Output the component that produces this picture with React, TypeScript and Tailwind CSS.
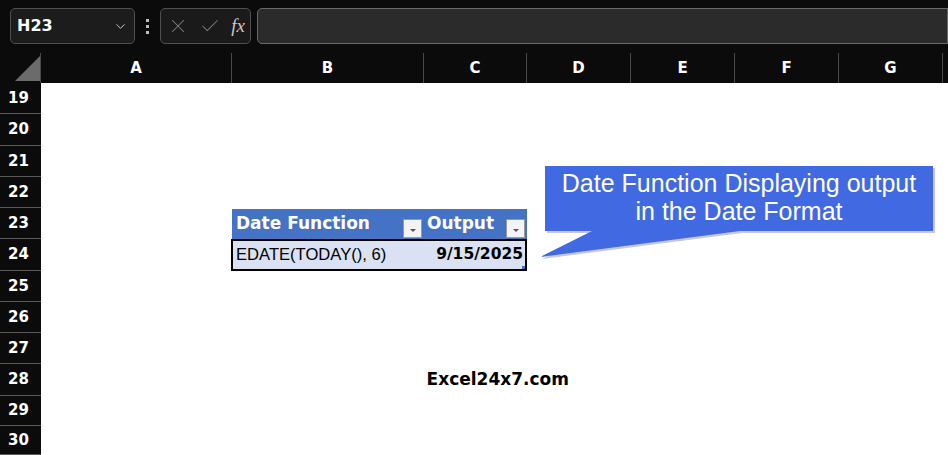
import { X, Check, ChevronDown } from "lucide-react";

const cols = ["A", "B", "C", "D", "E", "F", "G"];
const rows = [
  { n: 19, h: "h-[31px]" },
  { n: 20, h: "h-[32px]" },
  { n: 21, h: "h-[31px]" },
  { n: 22, h: "h-[31px]" },
  { n: 23, h: "h-[31px]" },
  { n: 24, h: "h-[32px]" },
  { n: 25, h: "h-[31px]" },
  { n: 26, h: "h-[31px]" },
  { n: 27, h: "h-[31px]" },
  { n: 28, h: "h-[32px]" },
  { n: 29, h: "h-[30px]" },
  { n: 30, h: "h-[29px]" },
];

const FilterBtn = () => (
  <div className="w-[19px] h-[19px] bg-[#f4f4f4] border border-[#9a9a9a] flex items-end justify-center pb-[5px]">
    <div className="w-0 h-0 border-l-[3px] border-r-[3px] border-t-[3px] border-l-transparent border-r-transparent border-t-[#555]" />
  </div>
);

const App = () => {
  return (
    <div className="relative w-[948px] h-[455px] overflow-hidden bg-[#0b0b0b] font-['DejaVu_Sans',sans-serif]">
      {/* formula bar */}
      <div className="flex items-center h-[53px] pl-[10px] pb-[1px] gap-[6px]">
        <div className="flex items-center justify-between w-[125px] h-[36px] rounded-[5px] border border-[#505050] bg-[#1c1c1c] pl-[6px] pr-[6px]">
          <span className="text-white font-bold text-[16px]">H23</span>
          <ChevronDown size={15} className="text-[#cfcfcf]" strokeWidth={1.5} />
        </div>
        <div className="flex flex-col gap-[3px] px-[5px]">
          <div className="w-[3px] h-[3px] bg-[#bdbdbd]" />
          <div className="w-[3px] h-[3px] bg-[#bdbdbd]" />
          <div className="w-[3px] h-[3px] bg-[#bdbdbd]" />
        </div>
        <div className="flex items-center justify-between w-[91px] h-[36px] rounded-[5px] border border-[#505050] bg-[#1a1a1a] pl-[6px] pr-[5px]">
          <X size={22} strokeWidth={1.1} className="text-[#7d7d7d]" />
          <Check size={22} strokeWidth={1.1} className="text-[#7d7d7d]" />
          <span className="text-[#c8c8c8] italic text-[19px] font-['Liberation_Serif',serif]">fx</span>
        </div>
        <div className="flex-1 h-[36px] rounded-l-[5px] border border-[#6a6a6a] bg-[#2b2b2b]" />
      </div>

      {/* column header */}
      <div className="flex h-[30px]">
        <div className="w-[41px] relative border-r border-[#4a4a4a]">
          <svg className="absolute left-[15px] top-[3px]" width="25" height="25">
            <polygon points="25,0 25,25 0,25" fill="#6b6b6b" />
          </svg>
        </div>
        {cols.map((c, i) => (
          <div
            key={c}
            className={`flex items-center justify-center text-white font-bold text-[15px] border-r border-[#4a4a4a] ${
              i === 0 ? "w-[191px]" : i === 1 ? "w-[192px]" : i === 2 ? "w-[103px]" : "w-[104px]"
            }`}
          >
            {c}
          </div>
        ))}
      </div>

      {/* sheet body */}
      <div className="flex">
        <div className="w-[41px] flex flex-col">
          {rows.map((r) => (
            <div
              key={r.n}
              className={`${r.h} flex items-center justify-center pr-[4px] text-white font-bold text-[15px] border-b border-[#5a5a5a] bg-[#0b0b0b]`}
            >
              {r.n}
            </div>
          ))}
        </div>
        <div className="flex-1 bg-white">
          <div className="grid grid-cols-[191px_192px_103px] grid-rows-[31px_32px_31px_31px_31px_32px_31px_31px_31px_32px_30px_29px]">
            {/* table header row 23 */}
            <div className="col-start-2 col-span-2 row-start-5 flex bg-[#4472c4] text-white font-bold text-[17px] mt-[1px]">
              <div className="w-[192px] flex items-center justify-between pl-[4px] pr-[2px]">
                <span>Date Function</span>
                <div className="mt-[8px]"><FilterBtn /></div>
              </div>
              <div className="flex-1 flex items-center justify-between pl-[3px] pr-[2px]">
                <span>Output</span>
                <div className="mt-[8px]"><FilterBtn /></div>
              </div>
            </div>
            {/* data row 24 */}
            <div className="col-start-2 col-span-2 row-start-6 relative flex items-center justify-between bg-[#d9e1f2] border-2 border-black -ml-[1px] pl-[3px] pr-[2px]">
              <span className="font-['Liberation_Sans',sans-serif] text-[16.6px] text-black">EDATE(TODAY(), 6)</span>
              <span className="font-bold text-[15.5px] text-black">9/15/2025</span>
              <div className="absolute right-[0px] bottom-[0px] w-[3px] h-[3px] bg-[#4472c4]" />
            </div>
            {/* watermark row 28 */}
            <div className="col-start-1 col-span-3 row-start-10 flex items-center justify-end">
              <span className="font-bold text-[17px] text-black mr-[-42px]">Excel24x7.com</span>
            </div>
          </div>
        </div>
      </div>

      {/* callout */}
      <svg className="absolute left-0 top-0 pointer-events-none" width="948" height="455">
        <polygon points="547,168 935,168 935,233 742,233 542,259 594,233 547,233" fill="#c8c8d4" />
        <polygon points="545,166 933,166 933,231 740,231 540,257 592,231 545,231" fill="#4169e1" />
      </svg>
      <div className="absolute left-[545px] top-[166px] w-[388px] h-[65px] pb-[4px] flex flex-col items-center justify-center text-white text-[25px] leading-[28px] font-['Liberation_Sans',sans-serif]">
        <span>Date Function Displaying output</span>
        <span>in the Date Format</span>
      </div>
    </div>
  );
};

export default App;
